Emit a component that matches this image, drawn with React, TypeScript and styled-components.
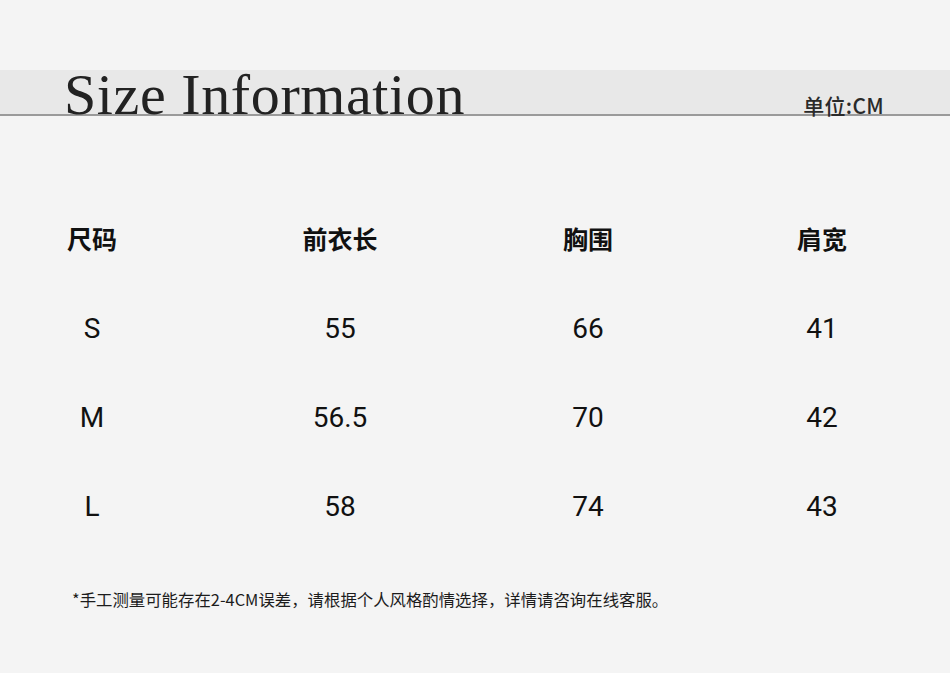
import styled, { createGlobalStyle } from "styled-components";

const GlobalStyle = createGlobalStyle`
  html, body {
    margin: 0;
    padding: 0;
    background: #f4f4f4;
    overflow: hidden;
  }
  body {
    font-family: Roboto, "Noto Sans CJK SC", sans-serif;
    color: #111;
  }
`;

const headers = ["尺码", "前衣长", "胸围", "肩宽"];

const rows = [
  ["S", "55", "66", "41"],
  ["M", "56.5", "70", "42"],
  ["L", "58", "74", "43"],
];

const App = () => {
  return (
    <Page>
      <GlobalStyle />
      <TitleBand>
        <Title>Size Information</Title>
        <Unit>单位:CM</Unit>
      </TitleBand>
      <Table>
        {headers.map((h) => (
          <HeadCell key={h}>{h}</HeadCell>
        ))}
        {rows.map((row) =>
          row.map((v, i) => (
            <Cell key={row[0] + i}>{v}</Cell>
          ))
        )}
      </Table>
      <Note>*手工测量可能存在2-4CM误差，请根据个人风格酌情选择，详情请咨询在线客服。</Note>
    </Page>
  );
};

export default App;

const Page = styled.div`
  width: 950px;
  height: 673px;
  padding-top: 70px;
  box-sizing: border-box;
  background: #f4f4f4;
`;

const TitleBand = styled.div`
  height: 44px;
  background: #e8e8e8;
  border-bottom: 2px solid #9a9a9a;
  display: flex;
  align-items: flex-end;
  justify-content: space-between;
  padding: 0 66px 0 64px;
`;

const Title = styled.h1`
  margin: 0 0 -10px 0;
  font-family: "Liberation Serif", serif;
  font-weight: 400;
  font-size: 58px;
  line-height: 1;
  color: #222;
  letter-spacing: 0.6px;
`;

const Unit = styled.div`
  font-family: "Noto Sans CJK SC", sans-serif;
  font-weight: 500;
  font-size: 21px;
  letter-spacing: 0.3px;
  line-height: 1;
  margin-bottom: -2px;
  color: #2a2a2a;
`;

const Table = styled.div`
  display: grid;
  grid-template-columns: 184px 312px 184px 284px;
  grid-auto-rows: 89px;
  margin-top: 79px;
`;

const HeadCell = styled.div`
  display: flex;
  align-items: center;
  justify-content: center;
  padding-bottom: 3px;
  font-family: "Noto Sans CJK SC", sans-serif;
  font-weight: 700;
  font-size: 25px;
  color: #111;
`;

const Cell = styled.div`
  display: flex;
  align-items: center;
  justify-content: center;
  font-family: Roboto, sans-serif;
  font-size: 28px;
  color: #111;
`;

const Note = styled.p`
  margin: 36px 0 0 72px;
  font-family: "Noto Sans CJK SC", sans-serif;
  font-size: 16.4px;
  line-height: 24px;
  color: #1c1c1c;
`;
